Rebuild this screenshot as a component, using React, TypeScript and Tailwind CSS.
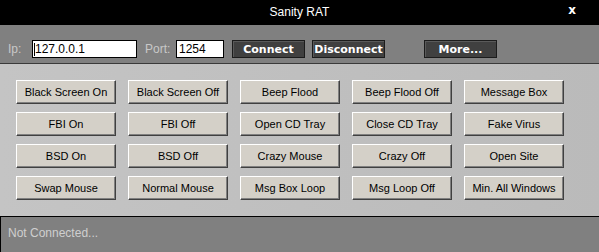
const commands = [
  "Black Screen On",
  "Black Screen Off",
  "Beep Flood",
  "Beep Flood Off",
  "Message Box",
  "FBI On",
  "FBI Off",
  "Open CD Tray",
  "Close CD Tray",
  "Fake Virus",
  "BSD On",
  "BSD Off",
  "Crazy Mouse",
  "Crazy Off",
  "Open Site",
  "Swap Mouse",
  "Normal Mouse",
  "Msg Box Loop",
  "Msg Loop Off",
  "Min. All Windows",
];

function DarkButton({ label, width }: { label: string; width: string }) {
  return (
    <button
      className={`${width} h-[18px] bg-[#404040] border border-[#1c1c1c] shadow-[inset_1px_1px_0_#5a5a5a] text-white font-bold text-[11px] leading-none flex items-center justify-center`}
      style={{ fontFamily: '"DejaVu Sans", Verdana, sans-serif' }}
    >
      {label}
    </button>
  );
}

export default function App() {
  return (
    <div
      className="w-[599px] h-[252px] flex flex-col overflow-hidden"
      style={{ fontFamily: '"Liberation Sans", Arial, sans-serif' }}
    >
      {/* title bar */}
      <div className="h-[25px] bg-black grid grid-cols-[1fr_auto_1fr] items-center text-white">
        <div />
        <span className="text-[12px] leading-none -mt-[2px]">Sanity RAT</span>
        <div className="flex justify-end pr-[23px]">
          <span
            className="text-[12px] font-bold leading-none -mt-[6px]"
            style={{ fontFamily: '"DejaVu Sans", Verdana, sans-serif' }}
          >
            x
          </span>
        </div>
      </div>

      {/* connection bar */}
      <div className="h-[39px] bg-[#808080] border-b border-[#3a3a3a] pt-[15px] pl-[8px] flex items-start text-[12px]">
        <span className="text-[#c8c8c8] w-[24px] leading-[18px]">Ip:</span>
        <div className="w-[105px] h-[18px] bg-white border border-black flex items-center pl-[1px] text-black">
          <span className="w-px h-[13px] bg-black" />
          <span>127.0.0.1</span>
        </div>
        <span className="text-[#c8c8c8] ml-[8px] w-[31px] leading-[18px]">Port:</span>
        <div className="w-[48px] h-[18px] bg-white border border-black flex items-center pl-[2px] text-black">
          1254
        </div>
        <div className="ml-[8px] flex gap-[7px]">
          <DarkButton label="Connect" width="w-[73px]" />
          <DarkButton label="Disconnect" width="w-[73px]" />
        </div>
        <div className="ml-[39px]">
          <DarkButton label="More..." width="w-[73px]" />
        </div>
      </div>

      {/* command grid */}
      <div className="h-[152px] bg-gradient-to-r from-[#c4c4c4] to-[#bababa] pt-[16px] pl-[16px]">
        <div className="grid grid-cols-[repeat(5,100px)] gap-x-[12px] gap-y-[8px]">
          {commands.map((c) => (
            <button
              key={c}
              className="h-[24px] bg-[#d4d0c8] border border-t-white border-l-white border-r-[#404040] border-b-[#404040] shadow-[inset_-1px_-1px_0_#808080] text-black text-[11px] leading-none flex items-center justify-center"
            >
              {c}
            </button>
          ))}
        </div>
      </div>

      {/* status */}
      <div className="flex-1 bg-[#808080] border-t border-l border-black pl-[7px] pt-[7px] text-[12px] text-[#cfcfcf]">
        Not Connected...
      </div>
    </div>
  );
}
